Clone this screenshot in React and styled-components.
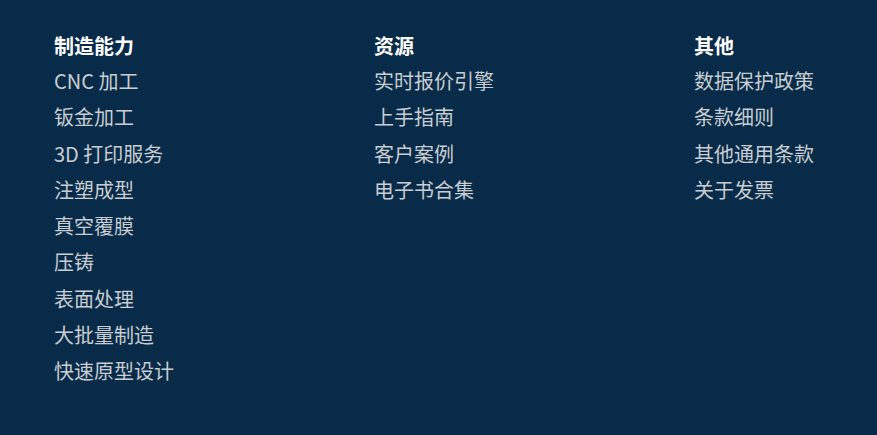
import React from "react";
import styled, { createGlobalStyle } from "styled-components";

const GlobalStyle = createGlobalStyle`
    html, body {
        margin: 0;
        padding: 0;
        background: #072b48;
    }
`;

const Footer = styled.footer`
    min-height: 100vh;
    box-sizing: border-box;
    padding: 28px 0 0 54px;
    background: #072b48;
    display: grid;
    grid-template-columns: 320px 320px 1fr;
    align-items: start;
    font-family: "Noto Sans CJK SC", "Noto Sans", sans-serif;
`;

const Column = styled.div`
    display: flex;
    flex-direction: column;
`;

const Heading = styled.h4`
    margin: 0;
    font-size: 20px;
    line-height: 35px;
    font-weight: 700;
    color: #ffffff;
`;

const Link = styled.a`
    font-size: 20px;
    line-height: 36.3px;
    color: #c9cdd2;
    text-decoration: none;
`;

const columns = [
    {
        title: "制造能力",
        links: [
            "CNC 加工",
            "钣金加工",
            "3D 打印服务",
            "注塑成型",
            "真空覆膜",
            "压铸",
            "表面处理",
            "大批量制造",
            "快速原型设计",
        ],
    },
    {
        title: "资源",
        links: ["实时报价引擎", "上手指南", "客户案例", "电子书合集"],
    },
    {
        title: "其他",
        links: ["数据保护政策", "条款细则", "其他通用条款", "关于发票"],
    },
];

const App = () => {
    return (
        <>
            <GlobalStyle />
            <Footer>
                {columns.map((col) => (
                    <Column key={col.title}>
                        <Heading>{col.title}</Heading>
                        {col.links.map((link) => (
                            <Link key={link} href="#">
                                {link}
                            </Link>
                        ))}
                    </Column>
                ))}
            </Footer>
        </>
    );
};

export default App;
